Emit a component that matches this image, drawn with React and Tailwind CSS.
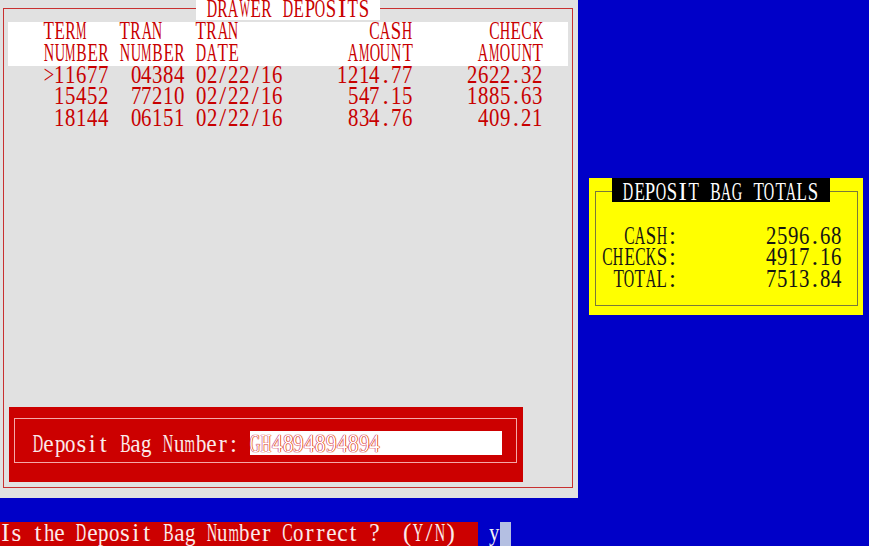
import React from "react";

// Times advance widths (1/1000 em), used to squeeze every glyph into the 80-col cell
const WIDTHS = {
  A: 722, B: 667, C: 667, D: 722, E: 611, F: 556, G: 722, H: 722, I: 333, K: 722, L: 611,
  M: 889, N: 722, O: 722, P: 556, R: 667, S: 556, T: 611, U: 722, W: 944, Y: 722,
  a: 444, b: 500, c: 444, e: 444, g: 500, h: 500, i: 278, m: 778, n: 500, o: 500,
  p: 500, r: 333, s: 389, t: 278, u: 500, y: 500,
  ">": 564, "/": 278, ".": 250, ":": 278, "?": 444, "(": 333, ")": 333, " ": 250,
};

const Cell = ({ ch }) => {
  const adv = (WIDTHS[ch] ?? 500) * 0.025;
  const s = Math.min(1, 10.4 / adv);
  return (
    <span className="flex w-[10.8625px] shrink-0 justify-center">
      <span className="whitespace-pre" style={{ transform: `scaleX(${s})` }}>
        {ch}
      </span>
    </span>
  );
};

// one text row of the 80x25 screen
const Row = ({ text, className = "" }) => (
  <div className={`flex h-[21.84px] leading-[17px] ${className}`}>
    {Array.from(text).map((ch, i) => (
      <Cell key={i} ch={ch} />
    ))}
  </div>
);

const sp = (n) => " ".repeat(n);

const header1 = "TERM" + sp(3) + "TRAN" + sp(3) + "TRAN" + sp(12) + "CASH" + sp(7) + "CHECK";
const header2 = "NUMBER" + sp(1) + "NUMBER" + sp(1) + "DATE" + sp(10) + "AMOUNT" + sp(6) + "AMOUNT";

const deposits = [
  { term: ">11677", tran: "04384", date: "02/22/16", cash: "1214.77", check: "2622.32" },
  { term: " 15452", tran: "77210", date: "02/22/16", cash: "547.15", check: "1885.63" },
  { term: " 18144", tran: "06151", date: "02/22/16", cash: "834.76", check: "409.21" },
];

const lineFor = (d) =>
  d.term + sp(2) + d.tran + sp(1) + d.date + d.cash.padStart(12) + d.check.padStart(12);

const totals = [
  { label: "CASH:", value: "2596.68" },
  { label: "CHECKS:", value: "4917.16" },
  { label: "TOTAL:", value: "7513.84" },
];

export default function App() {
  return (
    <div className="w-[869px] h-[546px] overflow-hidden bg-[#0000c8] font-['Liberation_Serif',serif] text-[25px]">
      <div className="flex h-[522px]">
        {/* drawer deposits panel */}
        <div className="relative w-[578px] h-[498px] bg-[#e1e1e1] pt-[8px] pl-[3px]">
          <div className="w-[570px] h-[480px] border border-[#c83030]">
            <div className="mt-[12.84px] ml-[4px] w-[560px] h-[43.68px] bg-white pl-[35.45px] text-[#c80000]">
              <Row text={header1} />
              <Row text={header2} />
            </div>
            <div className="pl-[39.45px] text-[#c80000]">
              {deposits.map((d) => (
                <Row key={d.term} text={lineFor(d)} />
              ))}
            </div>

            {/* deposit bag number entry */}
            <div className="mt-[276px] ml-[5px] w-[514px] h-[75px] bg-[#cc0000] pt-[11px] pl-[5px]">
              <div className="w-[503px] h-[45px] border border-[#f4a8a8] pt-[12px] pl-[17.6px]">
                <div className="flex h-[24px]">
                  <div className="w-[217.25px] pt-[4px] text-[#fbeaea]">
                    <Row text="Deposit Bag Number: " />
                  </div>
                  <div className="w-[252px] h-[24px] bg-white pt-[4px] text-white [text-shadow:0_0_1px_#cc0000,0_0_1px_#cc0000,0_0_1px_#cc0000]">
                    <Row text="GH4894894894" />
                  </div>
                </div>
              </div>
            </div>
          </div>

          <div className="absolute left-[195.5px] top-0 h-[20px] bg-white text-[#c80000]">
            <Row text=" DRAWER DEPOSITS " />
          </div>
        </div>

        {/* deposit bag totals */}
        <div className="relative ml-[11px] mt-[178px] w-[274px] h-[137px] bg-[#ffff00] pt-[13px] pl-[6px] text-[#141414]">
          <div className="w-[263px] h-[115px] border border-[#7a7a3a] pt-[34.5px]">
            <div className="flex">
              <div className="w-[82px]">
                {totals.map((t) => (
                  <Row key={t.label} text={t.label} className="justify-end" />
                ))}
              </div>
              <div className="w-[164px]">
                {totals.map((t) => (
                  <Row key={t.label} text={t.value} className="justify-end" />
                ))}
              </div>
            </div>
          </div>
          <div className="absolute left-[23px] top-0 w-[218px] h-[24px] bg-black pt-[4.5px] text-white">
            <Row text=" DEPOSIT BAG TOTALS " />
          </div>
        </div>
      </div>

      {/* prompt line */}
      <div className="flex h-[24px]">
        <div className="w-[478px] bg-[#cc0000] pt-[2px] text-[#fbeaea]">
          <Row text="Is the Deposit Bag Number Correct ?  (Y/N)" />
        </div>
        <div className="w-[10.8625px]" />
        <div className="w-[10.8625px] pt-[2px] text-[#f4f4f4]">
          <Row text="y" />
        </div>
        <div className="w-[10.8625px] h-[24px] bg-[#b4bfe2]" />
      </div>
    </div>
  );
}
